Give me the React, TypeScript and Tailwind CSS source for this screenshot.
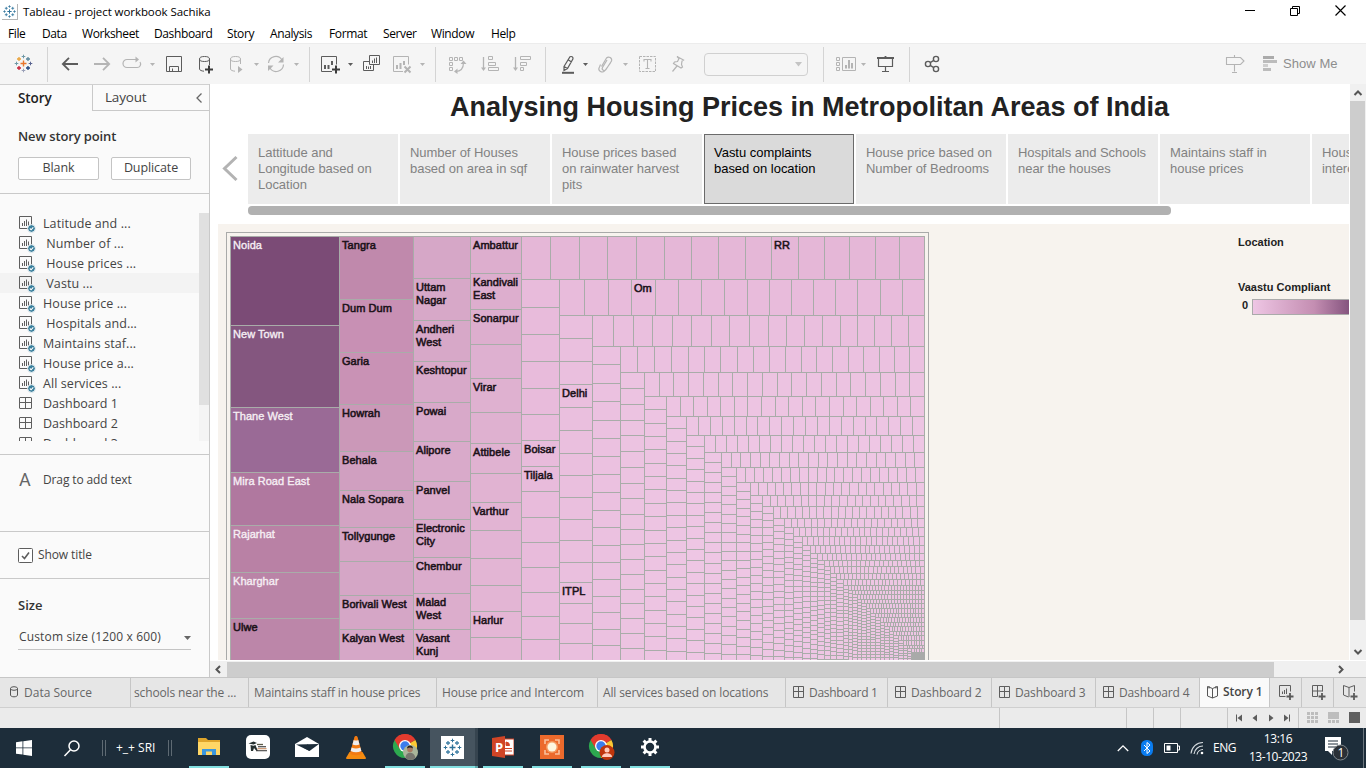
import React from "react";

type Kids = { children: React.ReactNode };

/* ---------- toolbar pieces ---------- */

function Ico({ children, c = "text-[#b4b4b4]", ml, w = 20 }: Kids & { c?: string; ml: string; w?: number }) {
  return (
    <svg width={w} height="20" viewBox={`0 0 ${w} 20`} fill="none" stroke="currentColor" strokeWidth="1" className={`shrink-0 ${ml} ${c}`}>
      {children}
    </svg>
  );
}

function Caret({ ml, c = "text-[#b4b4b4]" }: { ml: string; c?: string }) {
  return (
    <svg width="7" height="20" viewBox="0 0 7 20" className={`shrink-0 ${ml} ${c}`}>
      <path d="M1 9h5L3.500 12z" fill="currentColor" />
    </svg>
  );
}

function Sep({ ml }: { ml: string }) {
  return <div className={`h-[35px] w-px shrink-0 bg-[#d4d4d4] ${ml}`} />;
}

const dark = "text-[#5c5c5c]";

function TableauMark({ mono = false }: { mono?: boolean }) {
  const k = mono ? ["#2f7299", "#3f7fa5", "#3f7fa5", "#3f7fa5", "#3f7fa5"] : ["#e8762d", "#e9a23b", "#5b879b", "#c72037", "#1f447e"];
  const plus = (x: number, y: number, r: number) => `M${x - r} ${y}h${r * 2}M${x} ${y - r}v${r * 2}`;
  return (
    <g fill="none">
      <path d={plus(9.5, 9.5, 3)} stroke={k[0]} strokeWidth="1.4" />
      <path d={plus(5, 5, 2)} stroke={k[1]} strokeWidth="1.3" />
      <path d={plus(14, 5, 2)} stroke={k[2]} strokeWidth="1.3" />
      <path d={plus(5, 14, 2)} stroke={k[3]} strokeWidth="1.3" />
      <path d={plus(14, 14, 2)} stroke={k[4]} strokeWidth="1.3" />
      <path d={plus(9.5, 2.5, 1.8)} stroke={mono ? k[0] : "#7099a6"} />
      <path d={plus(2.5, 9.5, 1.8)} stroke={mono ? k[0] : "#7099a6"} />
      <path d={plus(16.5, 9.5, 1.8)} stroke={mono ? k[0] : "#5a6591"} />
      <path d={plus(9.5, 16.5, 1.8)} stroke={mono ? k[0] : "#9aa0b8"} />
    </g>
  );
}

function Toolbar() {
  return (
    <div className="flex h-[41px] shrink-0 items-center border-t border-[#ececec] bg-[#f5f5f5]">
      <Ico ml="ml-[14px]"><TableauMark /></Ico>
      <Sep ml="ml-[13px]" />
      <Ico ml="ml-3" c={dark}><path d="M2.500 10H18M9 3.800L2.800 10 9 16.200" strokeWidth="1.800" /></Ico>
      <Ico ml="ml-3"><path d="M2 10h15.500M11 3.800L17.200 10 11 16.200" strokeWidth="1.800" /></Ico>
      <Ico ml="ml-[10px]"><path d="M8 5.500H5a3.500 3.500 0 0 0 0 8h10a3.500 3.500 0 0 0 3-5.500M6 5.500h9" strokeWidth="1.200" /><path d="M13.500 2.500l3.500 3-3.500 3z" fill="currentColor" stroke="none" /></Ico>
      <Caret ml="ml-[7px]" />
      <Ico ml="ml-2" c={dark}><path d="M2.500 2.500h15v15h-15zM5.500 17.500v-5h9v5M8.500 14.500v3" /></Ico>
      <Ico ml="ml-3" c={dark}><ellipse cx="8.500" cy="5" rx="5" ry="2.500" /><path d="M3.500 5v10c0 1.200 2 2 4.500 2.200M13.500 5v6" /><path d="M13 11.500v8M9 15.500h8" strokeWidth="2" stroke="#3c3c3c" /></Ico>
      <Ico ml="ml-[11px]"><ellipse cx="8.500" cy="5" rx="5" ry="2.500" /><path d="M3.500 5v10c0 1.200 2 2 4.500 2.200M13.500 5v5" /><path d="M11 12v7l4.500-3.500z" fill="currentColor" stroke="none" /></Ico>
      <Caret ml="ml-[6px]" />
      <Ico ml="ml-[6px]"><path d="M2.500 9A7.300 7.300 0 0 1 16 6M17.500 10.500A7.300 7.300 0 0 1 4 14" strokeWidth="1.200" /><path d="M17.500 3v5.500H12zM2 17v-5.500h5.500z" fill="currentColor" stroke="none" /></Ico>
      <Caret ml="ml-[7px]" />
      <Sep ml="ml-[9px]" />
      <Ico ml="ml-[10px]" w={22} c={dark}><path d="M12 17.500H1.500v-15h15v8" /><path d="M5 15v-4M8.500 15v-4M12 11V7" strokeWidth="2" /><path d="M16 11.500v8M12 15.500h8" strokeWidth="2" stroke="#3c3c3c" /></Ico>
      <Caret ml="ml-[5px]" c={dark} />
      <Ico ml="ml-2" c={dark}><path d="M7.500 1.500h10v9h-10zM7.500 7.500h-6v9h10v-6M10.500 9V6.500M12.500 9V4.500M14.500 9V3.500M4.500 15v-3M6.500 15v-2.500M8.500 15v-3" /></Ico>
      <Ico ml="ml-[10px]" w={22}><path d="M11 17.500H1.500v-15h15v8" /><path d="M5 15v-4M8.500 15v-6M12 11V7" strokeWidth="2" /><path d="M12.500 12.500l6 6M18.500 12.500l-6 6" strokeWidth="2" /></Ico>
      <Caret ml="ml-[5px]" />
      <Sep ml="ml-[9px]" />
      <Ico ml="ml-3"><path d="M1.500 3.500h3v3h-3zM6.500 3.500h3v3h-3zM11.500 3.500h3v3h-3zM1.500 8.500h3v3h-3zM1.500 13.500h3v3h-3z" /><path d="M7.500 17.500c5 0 8-3 8-9" strokeWidth="1.200" /><path d="M12.500 10l3-3.500 3 3.500zM9.500 14.500L6 17.500l3.500 2.500z" fill="currentColor" stroke="none" /></Ico>
      <Ico ml="ml-3"><path d="M3.500 3v12" strokeWidth="1.300" /><path d="M1 13.500h5L3.500 17z" fill="currentColor" stroke="none" /><path d="M8.500 2.500h4v3h-4zM8.500 8.500h7v3h-7zM8.500 13.500h10v3h-10z" /></Ico>
      <Ico ml="ml-3"><path d="M3.500 3v12" strokeWidth="1.300" /><path d="M1 13.500h5L3.500 17z" fill="currentColor" stroke="none" /><path d="M8.500 2.500h10v3h-10zM8.500 8.500h6v3h-6zM8.500 13.500h3v3h-3z" /></Ico>
      <Sep ml="ml-[13px]" />
      <Ico ml="ml-3" c={dark}><path d="M6 12.500L12 2.800a2 2 0 0 1 3 2L9.500 14.500 6 16.500zM6 12.500l3.500 2M10.500 6l3 2" strokeWidth="1.200" /><path d="M4 18.800h12" strokeWidth="2" /></Ico>
      <Caret ml="ml-1" c={dark} />
      <Ico ml="ml-[7px]"><path d="M5.500 12.500l5-8.500a3 3 0 0 1 5 3L10 15.500a2 2 0 0 1-3.500-2L11 6M4.500 10.500l-1 2.500a3.200 3.200 0 0 0 5.500 3.500L14.500 9" strokeWidth="1.200" /></Ico>
      <Caret ml="ml-[6px]" />
      <Ico ml="ml-[9px]"><path d="M1.500 2.500h16v15h-16z" strokeDasharray="2.500 1" /><path d="M6 7.500v-2h7v2M9.500 5.500v9M7.500 14.500h4" strokeWidth="1.100" /></Ico>
      <Ico ml="ml-[10px]"><path d="M9 2.500l6.500 3.500-1.500 1-.5 3.500 1 2.500-1.500 1-7.500-4.500 1-1.500 3-.5 1.500-3zM9 12l-4.500 5.500" strokeWidth="1.200" /></Ico>
      <div className="ml-4 flex h-[23px] w-[104px] shrink-0 items-center justify-end rounded-sm border border-[#d0d0d0] pr-[5px]">
        <svg width="7" height="5"><path d="M0 0h7L3.500 4.500z" fill="#c4c4c4" /></svg>
      </div>
      <Sep ml="ml-[15px]" />
      <Ico ml="ml-3"><path d="M.5 3.500h3v3h-3zM.5 8.500h3v3h-3zM.5 13.500h3v3h-3zM6.500 3.500h13v13h-13z" /><path d="M10 14.500V11M13 14.500V6M16 14.500V9" strokeWidth="2" /></Ico>
      <Caret ml="ml-1" />
      <Ico ml="ml-[9px]" c={dark}><path d="M1 4h17M9.500 4V2" strokeWidth="1.800" /><path d="M2.500 4v8.500h14V4M9.500 12.500v5M6 17.500h7" strokeWidth="1.200" /></Ico>
      <Sep ml="ml-[13px]" />
      <Ico ml="ml-3" c={dark}><g strokeWidth="1.400"><circle cx="6" cy="10" r="2.600" /><circle cx="14" cy="5" r="2.600" /><circle cx="14" cy="15" r="2.600" /><path d="M8.200 8.600l3.600-2.200M8.200 11.400l3.600 2.200" /></g></Ico>
      <Ico ml="ml-[283px]"><path d="M1.500 3.500h14l3.500 3.500-3.500 3.500h-14zM9.500 1v2.500M9.500 10.500v7M7 18.500h5" strokeWidth="1.100" /></Ico>
      <Ico ml="ml-[17px]"><path d="M1 3.500h11" stroke="#ababab" strokeWidth="3" /><path d="M1 7.500h14" strokeWidth="3" stroke="#bcbcbc" /><path d="M1 11.500h5" strokeWidth="3" stroke="#cfcfcf" /><path d="M1 15.500h8" strokeWidth="3" stroke="#bcbcbc" /></Ico>
      <span className="ml-px whitespace-nowrap font-['Liberation_Sans',sans-serif] text-[13px] tracking-[0.05px] text-[#8d8d8d]">Show Me</span>
    </div>
  );
}

/* ---------- title and menus ---------- */

function TitleBar() {
  return (
    <div className="flex h-6 shrink-0 items-center bg-white font-['Open_Sans',sans-serif] text-black">
      <svg width="16" height="16" viewBox="-1 -1 21 21" className="ml-[2px] border-b border-r border-[#b5b5b5]"><TableauMark mono /></svg>
      <span className="ml-[5px] whitespace-nowrap text-[11.500px] tracking-[-0.07px]">Tableau - project workbook Sachika</span>
      <svg width="112" height="20" viewBox="0 0 112 20" className="ml-auto mr-[14px]" fill="none" stroke="#000" strokeWidth="1">
        <path d="M5 8.500h10M50.500 6.500h7v7h-7zM52.500 6.500v-2h7v7h-2" />
        <path d="M95.500 3.500l10 10M105.500 3.500l-10 10" strokeWidth="1.200" />
      </svg>
    </div>
  );
}

function MenuBar() {
  return (
    <div className="flex h-[19px] shrink-0 items-center whitespace-nowrap bg-white pl-2 font-['Open_Sans',sans-serif] text-[12px] tracking-[-0.38px] text-black">
      <span className="w-[34px]">File</span>
      <span className="w-[40px]">Data</span>
      <span className="w-[72px]">Worksheet</span>
      <span className="w-[73px]">Dashboard</span>
      <span className="w-[43px]">Story</span>
      <span className="w-[59px]">Analysis</span>
      <span className="w-[54px]">Format</span>
      <span className="w-[48px]">Server</span>
      <span className="w-[60px]">Window</span>
      <span>Help</span>
    </div>
  );
}

/* ---------- side panel ---------- */

const sheets = ["Latitude and ...", "\u00a0Number of ...", "\u00a0House prices ...", "\u00a0Vastu ...", "House price ...", "\u00a0Hospitals and...", "Maintains staf...", "House price a...", "All services ..."];
const boards = ["Dashboard 1", "Dashboard 2", "Dashboard 3"];

function SheetIcon() {
  return (
    <svg width="18" height="18" viewBox="0 0 18 18" className="ml-[18px] mt-px shrink-0" fill="none" stroke="#5e5e5e">
      <path d="M1.500 1.500h12v12h-12zM4.500 11v-3M6.500 11V6M8.500 11V4.500M10.500 11V6.500" strokeWidth="1" />
      <circle cx="13.500" cy="13.500" r="3.900" fill="#3a7f9c" stroke="#fafafa" strokeWidth="1" />
      <path d="M11.800 13.500l1.300 1.300 2.200-2.500" stroke="#fff" strokeWidth="1.100" />
    </svg>
  );
}

function GridIcon({ className = "" }: { className?: string }) {
  return (
    <svg width="14" height="14" viewBox="0 0 14 14" className={`shrink-0 ${className}`} fill="none" stroke="#5e5e5e">
      <rect x=".5" y="1.500" width="12" height="11" rx=".5" />
      <path d="M6.500 1.500v11M.5 6.500h12" />
    </svg>
  );
}

function SidePanel() {
  return (
    <div className="flex w-[210px] shrink-0 flex-col border-r border-[#c9c9c9] bg-[#fafafa] font-['Open_Sans',sans-serif] text-[12.500px] text-[#444]">
      <div className="flex h-[27px] shrink-0 border-t border-[#d0d0d0]">
        <div className="flex w-[92px] items-center pl-[18px] text-[13.500px] font-semibold tracking-[-0.1px] text-[#222]">Story</div>
        <div className="flex grow items-center border-b border-l border-[#c9c9c9] pl-3 text-[13.500px] tracking-[-0.2px]">
          Layout
          <svg width="8" height="12" viewBox="0 0 8 12" className="ml-auto mr-[6px]" fill="none" stroke="#666" strokeWidth="1.300"><path d="M6.500 1.500L2 6l4.500 4.500" /></svg>
        </div>
      </div>
      <div className="mt-[16px] pl-[18px] text-[13px] font-semibold leading-[18px] tracking-[-0.12px] text-[#333]">New story point</div>
      <div className="mt-3 flex gap-3 pl-[18px] text-[12.500px] leading-[20px] tracking-[-0.1px]">
        <div className="h-[23px] w-[81px] rounded-[2px] border border-[#c4c4c4] bg-white text-center">Blank</div>
        <div className="h-[23px] w-[80px] rounded-[2px] border border-[#c4c4c4] bg-white text-center">Duplicate</div>
      </div>
      <div className="mt-[13px] h-px shrink-0 bg-[#c9c9c9]" />
      <div className="mt-[19px] flex h-[228px] shrink-0 overflow-hidden">
        <div className="flex grow flex-col">
          {sheets.map((s, i) => (
            <div key={s} className={`flex h-5 shrink-0 items-center ${i === 3 ? "bg-[#f3f3f3]" : ""}`}>
              <SheetIcon />
              <span className="ml-[7px] whitespace-nowrap pt-[2px] tracking-[0.08px]">{s}</span>
            </div>
          ))}
          {boards.map((s) => (
            <div key={s} className="flex h-5 shrink-0 items-center">
              <GridIcon className="ml-[19px]" />
              <span className="ml-[10px] whitespace-nowrap pt-[2px]">{s}</span>
            </div>
          ))}
        </div>
        <div className="w-[10px] shrink-0 bg-[#f4f4f4]"><div className="h-[192px] bg-[#e0e0e0]" /></div>
      </div>
      <div className="mt-[13px] flex h-[78px] shrink-0 border-y border-[#c9c9c9] pt-[15px]">
        <span className="w-[43px] pl-[19px] font-['Roboto',sans-serif] text-[18px] leading-[20px] text-[#666]">A</span>
        <span className="text-[12px] leading-[20px] tracking-[-0.12px]">Drag to add text</span>
      </div>
      <div className="flex h-[47px] shrink-0 items-center border-b border-[#c9c9c9] pl-[18px]">
        <svg width="15" height="15" viewBox="0 0 15 15" fill="#fff" stroke="#5e5e5e"><rect x=".5" y=".5" width="14" height="14" rx="1" /><path d="M4 8l2.500 2.500L11 4.500" fill="none" strokeWidth="1.600" /></svg>
        <span className="ml-[5px] text-[12px] tracking-[-0.1px]">Show title</span>
      </div>
      <div className="mt-[16px] pl-[18px] text-[13px] font-semibold leading-[20px] text-[#333]">Size</div>
      <div className="ml-[18px] mt-[12px] flex h-[23px] w-[173px] items-center border-b border-[#c4c4c4] pb-[2px] pl-px text-[12px] tracking-[0.16px]">
        Custom size (1200 x 600)
        <svg width="7" height="4" className="ml-auto mt-[2px]"><path d="M0 0h7L3.500 4z" fill="#666" /></svg>
      </div>
    </div>
  );
}

/* ---------- treemap ---------- */

type Cell = { y: number; c: string; t?: string[]; light?: boolean };
type Col = { x: number; w: number; cells: Cell[] };

const bigCols: Col[] = [
  { x: 230, w: 109, cells: [
    { y: 236, c: "#7b4b76", t: ["Noida"], light: true },
    { y: 325, c: "#84567f", t: ["New Town"], light: true },
    { y: 407, c: "#9a6a96", t: ["Thane West"], light: true },
    { y: 472, c: "#b0789f", t: ["Mira Road East"], light: true },
    { y: 525, c: "#b981a5", t: ["Rajarhat"], light: true },
    { y: 572, c: "#ba84a7", t: ["Kharghar"], light: true },
    { y: 618, c: "#bc86a9", t: ["Ulwe"] },
  ] },
  { x: 339, w: 74, cells: [
    { y: 236, c: "#c089ac", t: ["Tangra"] },
    { y: 299, c: "#c890b4", t: ["Dum Dum"] },
    { y: 352, c: "#c992b5", t: ["Garia"] },
    { y: 404, c: "#cb98b8", t: ["Howrah"] },
    { y: 451, c: "#d09fc0", t: ["Behala"] },
    { y: 490, c: "#d3a3c3", t: ["Nala Sopara"] },
    { y: 527, c: "#d5a5c5", t: ["Tollygunge"] },
    { y: 561, c: "#d5a6c6" },
    { y: 595, c: "#d5a6c6", t: ["Borivali West"] },
    { y: 629, c: "#d6a7c7", t: ["Kalyan West"] },
  ] },
  { x: 413, w: 57, cells: [
    { y: 236, c: "#d6a7c7" },
    { y: 278, c: "#d7a8c8", t: ["Uttam", "Nagar"] },
    { y: 320, c: "#d7a8c8", t: ["Andheri", "West"] },
    { y: 361, c: "#d8a9c9", t: ["Keshtopur"] },
    { y: 402, c: "#d8a9c9", t: ["Powai"] },
    { y: 441, c: "#d9aaca", t: ["Alipore"] },
    { y: 481, c: "#daabcb", t: ["Panvel"] },
    { y: 519, c: "#daabcb", t: ["Electronic", "City"] },
    { y: 557, c: "#dbaccc", t: ["Chembur"] },
    { y: 593, c: "#dcadcc", t: ["Malad", "West"] },
    { y: 629, c: "#dcadcd", t: ["Vasant", "Kunj"] },
  ] },
  { x: 470, w: 51, cells: [
    { y: 236, c: "#ddaece", t: ["Ambattur"] },
    { y: 273, c: "#ddaece", t: ["Kandivali", "East"] },
    { y: 309, c: "#ddaece", t: ["Sonarpur"] },
    { y: 344, c: "#deb0d0" },
    { y: 378, c: "#dfb1d0", t: ["Virar"] },
    { y: 412, c: "#dfb1d0" },
    { y: 443, c: "#e0b2d1", t: ["Attibele"] },
    { y: 473, c: "#e1b3d2" },
    { y: 502, c: "#e2b4d3", t: ["Varthur"] },
    { y: 530, c: "#e2b4d4" },
    { y: 558, c: "#e3b5d4" },
    { y: 585, c: "#e3b5d4" },
    { y: 611, c: "#e4b6d5", t: ["Harlur"] },
    { y: 637, c: "#e4b6d5" },
  ] },
];

// One entry per nested corner: left edge, row top, row bottom, cell width in the row, cell height in the column
const shells: [number, number, number, number, number][] = [
  [521, 236, 279, 27, 25.5], [559, 279, 315, 22.5, 21.5], [592, 315, 346, 19, 17.6], [620, 346, 372, 16.4, 15.4],
  [644, 372, 396, 14.6, 13.4], [666, 396, 416, 13.3, 12.3], [686, 416, 435, 12.1, 11.6], [704, 435, 452, 11, 10],
  [721, 452, 467, 9.7, 9.2], [736, 467, 482, 8.9, 8.7], [750, 482, 495, 8.3, 8], [762, 495, 506, 7.6, 7],
  [773, 506, 518, 7.2, 6.5], [784, 518, 527, 6.6, 6], [793, 527, 536, 6, 5.5], [802, 536, 545, 5.4, 5.1],
  [810, 545, 553, 5, 4.8], [817, 553, 560, 4.8, 4.5], [824, 560, 566, 4.5, 4.2], [830, 566, 573, 4.2, 4],
  [836, 573, 579, 4, 3.9], [843, 579, 585, 3.8, 3.5], [848, 585, 590, 3.1, 3.4], [852, 590, 594, 3, 3.2],
  [857, 594, 599, 3, 3.1], [861, 599, 603, 3, 3], [866, 603, 608, 2.9, 3], [870, 608, 613, 2.9, 3],
  [875, 613, 617, 2.9, 3], [880, 617, 622, 2.8, 3], [884, 622, 626, 2.8, 2.8], [889, 626, 631, 2.8, 2.8],
  [893, 631, 635, 2.7, 2.7], [898, 635, 640, 2.7, 2.7], [903, 640, 645, 2.6, 2.6], [907, 645, 648, 2.5, 2.5],
  [911, 648, 652, 2.5, 2.5],
];
const rowSplits: Record<number, number[]> = {
  0: [550, 579, 607, 636, 664, 691, 718, 745, 771, 798, 824, 849, 875, 899],
  1: [584, 608, 631, 655, 678, 701, 724, 747, 769, 791, 813, 835, 857, 880, 902],
  2: [613, 633, 652, 672, 691, 711, 729, 749, 768, 786, 804, 822, 840, 857, 874, 891, 908],
  3: [637, 654, 671, 688, 704, 720, 737, 753, 769, 785, 801, 816, 832, 848, 863, 879, 894, 909],
};
const colSplits: Record<number, number[]> = {
  0: [307, 334, 361, 388, 414, 440, 466, 491, 517, 542, 567, 592, 616, 639],
  1: [338, 361, 384, 407, 430, 453, 475, 497, 519, 540, 562, 582, 603, 623, 643],
  2: [364, 383, 401, 420, 438, 456, 474, 492, 510, 527, 545, 562, 579, 596, 612, 629, 645],
  3: [388, 404, 420, 435, 451, 467, 483, 498, 514, 529, 544, 559, 574, 589, 603, 618, 633, 648],
};
const RIGHT = 924;
const BOTTOM = 660;
const tones = ["#e5b7d7", "#e8bbdb", "#eabfde", "#ebc1e0", "#ecc3e1", "#edc4e2", "#edc5e3", "#eec6e4"];

function evenSplits(a: number, b: number, step: number): number[] {
  const n = Math.round((b - a) / step);
  return Array.from({ length: Math.max(0, n - 1) }, (_, i) => Math.round(a + ((b - a) * (i + 1)) / n));
}

function shellLines(): string {
  let d = "";
  shells.forEach(([x, y0, y1, cw, ch], i) => {
    const nextX = i + 1 < shells.length ? shells[i + 1][0] : 914;
    d += `M${x + 0.5} ${y0}V${BOTTOM}M${x} ${y1 + 0.5}H${RIGHT}`;
    (rowSplits[i] ?? evenSplits(x, RIGHT, cw)).forEach((v) => { d += `M${v + 0.5} ${y0}V${y1}`; });
    (colSplits[i] ?? evenSplits(y1, BOTTOM + 3, ch)).forEach((v) => { if (v < BOTTOM) d += `M${x} ${v + 0.5}H${nextX}`; });
  });
  return d;
}

const inner: [number, number, string][] = [[774, 249, "RR"], [634, 292, "Om"], [562, 397, "Delhi"], [524, 453, "Boisar"], [524, 479, "Tiljala"], [562, 595, "ITPL"]];

function Treemap() {
  return (
    <svg width="703" height="428" viewBox="226 232 703 428" className="block" fontFamily="'Liberation Sans', Arial, sans-serif" fontSize="11">
      <rect x="226.500" y="232.500" width="702" height="440" fill="#f7f3ee" stroke="#a9aaa9" />
      <g shapeRendering="crispEdges">
        {bigCols.map((col) => col.cells.map((cell, i) => (
          <rect key={`${col.x}-${cell.y}`} x={col.x} y={cell.y} width={col.w} height={(col.cells[i + 1]?.y ?? BOTTOM) - cell.y} fill={cell.c} />
        )))}
        {shells.map(([x, y], i) => <rect key={x} x={x} y={y} width={RIGHT - x} height={BOTTOM - y} fill={tones[Math.min(i, tones.length - 1)]} />)}
        {shells.slice(0, 7).map(([x, , y1], i) => <rect key={x} x={x} y={y1} width={shells[i + 1][0] - x} height={BOTTOM - y1} fill={tones[i + 1]} />)}
      </g>
      <path shapeRendering="crispEdges" fill="none" stroke="#a9aca9" d={shellLines() + bigCols.map((c) => `M${c.x + 0.5} 236V660` + c.cells.map((k) => `M${c.x} ${k.y + 0.5}h${c.w}`).join("")).join("") + "M521 236.500H925M924.500 236V660"} />
      <rect x="912" y="652" width="13" height="8" fill="#a9aaa9" />
      {bigCols.map((col) => col.cells.map((cell) => cell.t?.map((s, i) => (
        <text key={s + cell.y} x={col.x + 3} y={cell.y + 13 + i * 13} fill={cell.light ? "#f6eff4" : "#1c1219"} stroke={cell.light ? "#f6eff4" : "#1c1219"} strokeWidth={cell.light ? 0.35 : 0.55} letterSpacing=".05">{s}</text>
      ))))}
      {inner.map(([x, y, s]) => <text key={s} x={x} y={y} fill="#1c1219" stroke="#1c1219" strokeWidth=".55" letterSpacing=".05">{s}</text>)}
    </svg>
  );
}

/* ---------- story canvas ---------- */

const points = ["Lattitude and\nLongitude based on\nLocation", "Number of Houses\nbased on area in sqf", "House prices based\non rainwater harvest\npits", "Vastu complaints\nbased on location", "House price based on\nNumber of Bedrooms", "Hospitals and Schools\nnear the houses", "Maintains staff in\nhouse prices", "House price and\nintercom"];

function Story() {
  return (
    <div className="flex min-w-0 grow flex-col overflow-hidden bg-white pr-px font-['Liberation_Sans',Arial,sans-serif]">
      <h1 className="mt-[5px] h-[36px] shrink-0 whitespace-nowrap pl-[60px] text-center text-[27px] font-bold leading-[36px] text-[#222]">Analysing Housing Prices in Metropolitan Areas of India</h1>
      <div className="mt-[9px] flex h-[70px] shrink-0 items-center">
        <svg width="38" height="30" viewBox="0 0 38 30" className="shrink-0" fill="none" stroke="#b3b3b3" strokeWidth="3"><path d="M26.500 3L14.500 14.500 26.500 26" /></svg>
        <div className="flex h-full gap-[2px] overflow-hidden">
          {points.map((p, i) => (
            <div key={p} className={`h-[70px] w-[150px] shrink-0 whitespace-pre text-[13px] leading-4 tracking-[-0.03px] ${i === 3 ? "border border-[#6b6b6b] bg-[#dadada] pl-[9px] pt-[10px] text-black" : "bg-[#ececec] pl-[10px] pt-[11px] text-[#828282]"}`}>{p}</div>
          ))}
        </div>
      </div>
      <div className="ml-[38px] mt-[2px] h-[9px] w-[923px] shrink-0 rounded-[4px] bg-[#b1b1b1]" />
      <div className="ml-2 mt-[9px] flex grow overflow-hidden bg-[#f7f3ee] pl-2 pt-2">
        <div className="shrink-0"><Treemap /></div>
        <div className="ml-[309px] flex flex-col text-[11px] font-bold text-[#222]">
          <span className="mt-[3px] leading-[14px]">Location</span>
          <span className="mt-[31px] whitespace-nowrap leading-[14px]">Vaastu Compliant</span>
          <div className="mt-[5px] flex items-center">
            <span className="w-[14px] pb-[3px] pl-1 leading-[13px]">0</span>
            <div className="h-4 w-[104px] shrink-0 border border-[#aaa] bg-linear-to-r from-[#eec6e4] via-[#c48eb2] via-60% to-[#7b4b76]" />
          </div>
        </div>
      </div>
    </div>
  );
}

function VScroll() {
  return (
    <div className="flex w-4 shrink-0 flex-col bg-[#f0f0f0]">
      <svg width="16" height="17" viewBox="0 0 16 17" fill="none" stroke="#555" strokeWidth="2"><path d="M4.500 11L8 7.500l3.500 3.500" /></svg>
      <div className="h-[519px] w-[15px] bg-[#cdcdcd]" />
      <svg width="16" height="17" viewBox="0 0 16 17" className="mt-auto" fill="none" stroke="#555" strokeWidth="2"><path d="M4.500 7L8 10.500 11.500 7" /></svg>
    </div>
  );
}

function HScroll() {
  return (
    <div className="flex h-[17px] shrink-0 items-center border-t border-white bg-[#f0f0f0]">
      <svg width="17" height="15" viewBox="0 0 17 15" fill="none" stroke="#555" strokeWidth="2"><path d="M10 4L6.500 7.500 10 11" /></svg>
      <div className="h-[15px] w-[1047px] bg-[#cdcdcd]" />
      <svg width="16" height="15" viewBox="0 0 16 15" className="ml-[59px]" fill="none" stroke="#555" strokeWidth="2"><path d="M6 4l3.500 3.500L6 11" /></svg>
    </div>
  );
}

/* ---------- sheet tabs and status ---------- */

function BookIcon() {
  return <svg width="13" height="14" viewBox="0 0 13 14" className="shrink-0" fill="none" stroke="#555"><path d="M6.500 3.500L1.500 1.500v9.500l5 2 5-2V1.500zM6.500 3.500V13M3 1v2.500M10 1v2.500" /></svg>;
}

function PlusBadge() {
  return <path d="M12 9v7M8.500 12.500h7" stroke="#5a5a5a" strokeWidth="1.800" />;
}

function TabGrid() {
  return (
    <svg width="12" height="14" viewBox="0 0 12 14" className="mb-[2px] shrink-0" fill="none" stroke="#5e5e5e">
      <path d="M.5 1.500h10v11H.5zM5.500 1.500v11M.5 6.500h10" />
    </svg>
  );
}

const tabCls = "flex h-full shrink-0 items-center border-r border-[#c6c6c6] whitespace-nowrap";

function SheetTabs() {
  return (
    <div className="flex h-[31px] shrink-0 items-center border-y border-b-[#cfcfcf] border-t-[#c6c6c6] bg-[#e6e6e6] font-['Open_Sans',sans-serif] text-[12px] tracking-[-0.13px] text-[#666]">
      <div className={`${tabCls} w-[131px] pl-[9px] tracking-[0px]`}>
        <svg width="10" height="12" viewBox="0 0 10 12" className="mb-[2px] mr-[5px]" fill="none" stroke="#555"><ellipse cx="5" cy="2.500" rx="3.500" ry="1.800" /><path d="M1.500 2.500v6.500c0 2.400 7 2.400 7 0V2.500" /></svg>Data Source
      </div>
      <div className={`${tabCls} w-[118px] pl-[3px]`}>schools near the ...</div>
      <div className={`${tabCls} w-[188px] pl-[5px]`}>Maintains staff in house prices</div>
      <div className={`${tabCls} w-[161px] pl-[5px]`}>House price and Intercom</div>
      <div className={`${tabCls} w-[188px] pl-[5px]`}>All services based on locations</div>
      <div className={`${tabCls} w-[102px] gap-1 pl-[7px] tracking-[-0.3px]`}><TabGrid />Dashboard 1</div>
      <div className={`${tabCls} w-[104px] gap-1 pl-[7px]`}><TabGrid />Dashboard 2</div>
      <div className={`${tabCls} w-[104px] gap-1 pl-[7px]`}><TabGrid />Dashboard 3</div>
      <div className={`${tabCls} w-[104px] gap-1 pl-[7px]`}><TabGrid />Dashboard 4</div>
      <div className={`${tabCls} w-[70px] gap-1 bg-[#fafafa] pb-px pl-[6px] font-semibold tracking-[-0.1px] text-[#444]`}><BookIcon />Story 1</div>
      <div className={`${tabCls} w-[32px] pl-[8px]`}><svg width="17" height="17" fill="none" stroke="#5e5e5e"><path d="M7.500 12.500h-6v-11h11v6M4.500 10V7.500M6.500 10V6M8.500 10V4.500" /><PlusBadge /></svg></div>
      <div className={`${tabCls} w-[32px] pl-[8px]`}><svg width="17" height="17" fill="none" stroke="#5e5e5e"><path d="M7.500 12.500h-5v-11h10v6M7.500 1.500v11M2.500 7h10" /><PlusBadge /></svg></div>
      <div className="flex h-full grow items-center pl-[8px]"><svg width="17" height="17" fill="none" stroke="#5e5e5e"><path d="M7 3.500L1.500 1.500v9.500l5 2M7 3.500l5.500-2v6M7 3.500V13" /><PlusBadge /></svg></div>
    </div>
  );
}

function StatusBar() {
  return (
    <div className="flex h-5 shrink-0 bg-[#ebebeb]">
      <div className="w-[1000px] border-r border-[#c6c6c6]" />
      <div className="w-[127px] border-r border-[#c6c6c6]" />
      <div className="w-[27px] border-r border-[#c6c6c6]" />
      <div className="w-[27px] border-r border-[#c6c6c6]" />
      <div className="w-[47px] border-r border-[#c6c6c6]" />
      <div className="flex w-[71px] items-center border-r border-[#c6c6c6]">
        <svg width="70" height="12" viewBox="0 0 70 12" fill="#5c5c5c"><path d="M8 2.500h1v7H8zM14 2.500v7L9.500 6zM29 2.500v7L24.500 6zM41 2.500v7L45.500 6zM56 2.500v7L60.500 6zM61 2.500h1v7h-1z" /></svg>
      </div>
      <svg width="67" height="20" viewBox="0 0 67 20" fill="#bdbdbd">
        {[0, 4, 8].map((x) => [4, 8, 12].map((y) => <rect key={`${x}-${y}`} x={8 + x} y={y} width="3" height="3" />))}
        <path d="M29 4h11v7H29zM29 12h3v3h-3zM33 12h3v3h-3zM37 12h3v3h-3z" />
        <path d="M50 4h11v11H50z" fill="#5f5f5f" />
      </svg>
    </div>
  );
}

/* ---------- taskbar ---------- */

function Slot({ children, w, open = false, active = false }: Kids & { w: string; open?: boolean; active?: boolean }) {
  return (
    <div className={`flex h-full shrink-0 flex-col items-center ${w} ${active ? "bg-[#46545f]" : ""}`}>
      <div className="flex grow items-center justify-center">{children}</div>
      <div className={`h-[2px] ${active ? "w-full" : "w-10"} ${open ? "bg-[#82dfe0]" : ""}`} />
    </div>
  );
}

function Chrome({ badge }: { badge: "photo" | "red" }) {
  return (
    <svg width="28" height="28" viewBox="-1 0 28 28">
      <path d="M13 13L2.600 7A12 12 0 0 1 23.400 7z" fill="#e33b2e" />
      <path d="M13 13L23.400 7A12 12 0 0 1 13 25z" fill="#fcc934" />
      <path d="M13 13v12A12 12 0 0 1 2.600 7z" fill="#2da94f" />
      <path d="M13 7h10.500a12 12 0 0 0-20.900 0L7.800 16z" fill="#e33b2e" />
      <circle cx="13" cy="13" r="6" fill="#fff" /><circle cx="13" cy="13" r="4.700" fill="#3b7ded" />
      {badge === "red" ? (
        <g><circle cx="19" cy="19.500" r="7.500" fill="#bf360c" /><circle cx="19" cy="17" r="2.500" fill="#ffccbc" /><path d="M14 24c0-5 10-5 10 0z" fill="#ffccbc" /></g>
      ) : (
        <g><circle cx="18.500" cy="19.500" r="7.500" fill="#a9b59a" /><circle cx="18" cy="16.500" r="2.800" fill="#a87961" /><path d="M15 15.500c0-4 6-4 6 0-2-1.500-4-1.500-6 0z" fill="#27211f" /><path d="M13.500 25c0-7 9-7 10 0a7.500 7.500 0 0 1-10 0z" fill="#77766f" /></g>
      )}
    </svg>
  );
}

function Taskbar() {
  return (
    <div className="flex h-10 shrink-0 items-center bg-[#1d2d3a] font-['Open_Sans',sans-serif] text-[12px] text-white">
      <div className="flex w-12 justify-center"><svg width="16" height="16" fill="#fff"><path d="M0 2.200L6.500 1.300V7.500H0zM7.300 1.200L16 0v7.500H7.300zM0 8.300h6.500v6.300L0 13.700zM7.300 8.300H16V16l-8.700-1.200z" /></svg></div>
      <div className="flex w-12 justify-center"><svg width="18" height="18" fill="none" stroke="#fff" strokeWidth="1.500"><circle cx="11" cy="7" r="5" /><path d="M7.500 10.800L1.500 17" /></svg></div>
      <div className="ml-[6px] h-4 w-[4px] border-x border-[#5e6a73]" />
      <span className="ml-[10px] w-[42px] whitespace-nowrap text-[12px] tracking-[0px]">+_+ SRI</span>
      <div className="ml-[10px] h-4 w-[4px] border-x border-[#5e6a73]" />
      <div className="w-[12px]" />
      <Slot w="w-[49px]" open><svg width="22" height="20" viewBox="0 0 22 20"><path d="M0 1h8l2 2h12v15H0z" fill="#dfa52b" /><path d="M0 5h22v13H0z" fill="#ffd766" /><path d="M4 18v-6h14v6h-4v-3.500H8V18z" fill="#3b97dd" /></svg></Slot>
      <Slot w="w-[49px]"><svg width="24" height="24" viewBox="0 0 24 24"><rect width="24" height="24" rx="5" fill="#fff" /><path d="M2.500 8.500l5-2 3.500 1.500-3.500 1.500zM4.500 10l3 .8 2-.8.5 1.500 2 4.500h-1.500l-2.500-3-1 3H5z" fill="#25302f" /><path d="M11 9.500h6" stroke="#5c5b48" strokeWidth="1.300" /><path d="M12 11.700h8" stroke="#555" strokeWidth="1.300" /><path d="M11.500 13.700h9" stroke="#c98d62" strokeWidth="1.100" /><path d="M10 15.700h11" stroke="#444" strokeWidth="1.100" /></svg></Slot>
      <Slot w="w-[49px]"><svg width="24" height="20" viewBox="0 0 24 20"><path d="M0 7l12-7 12 7v13H0z" fill="#fff" /><path d="M1 7.500L24 7l-9.500 7z" fill="#1d2d3a" /><path d="M13 7l-4 4 5.500 3z" fill="#1d2d3a" /></svg></Slot>
      <Slot w="w-[49px]"><svg width="20" height="23" viewBox="0 0 20 23"><path d="M3.500 16h13l3.500 6a1 1 0 0 1-1 1H1a1 1 0 0 1-1-1z" fill="#f58b10" /><path d="M10 0c1 0 1.400.6 1.600 1.300L16 17c-1 3-11 3-12 0L8.400 1.300C8.600.6 9 0 10 0z" fill="#f27a12" /><path d="M7.700 4l-1.200 4.500q3.500 1.500 7 0L12.300 4q-2.300 1-4.600 0zM5.600 11.500L4.700 15q5.300 2.500 10.600 0l-.9-3.500q-4.400 2-8.800 0z" fill="#eee" /></svg></Slot>
      <Slot w="w-[50px]" open><Chrome badge="photo" /></Slot>
      <Slot w="w-[45px]" open active><svg width="23" height="23" viewBox="-2 -2 23 23"><path d="M-2-2h23v23H-2z" fill="#fff" /><TableauMark mono /></svg></Slot>
      <div className="flex h-full w-[3px] flex-col justify-end bg-[#36444f]"><div className="h-[2px] bg-[#5fa9ac]" /></div>
      <Slot w="w-[49px]" open><svg width="22" height="22" viewBox="0 0 22 22"><path d="M11 3h11v16H11z" fill="#fff" stroke="#d04526" /><path d="M14 6v3.500h3.500A3.500 3.500 0 0 0 14 6M13 12.500h7M13 15h7" fill="#d04526" stroke="#d04526" /><path d="M0 2l13-2v22L0 20z" fill="#d04526" /><text x="3" y="16" fill="#fff" fontFamily="'Open Sans',sans-serif" fontWeight="700" fontSize="13">P</text></svg></Slot>
      <Slot w="w-[49px]" open><svg width="24" height="24" viewBox="0 0 24 24"><path d="M0 0h24v24H0z" fill="#ec6a2c" /><path d="M5 9V5h4M15 5h4v4M19 15v4h-4M9 19H5v-4" fill="none" stroke="#f9c09c" strokeWidth="1.600" /><circle cx="12" cy="12" r="6" fill="#f59b61" /><circle cx="12" cy="12" r="4.500" fill="#fdf6df" /></svg></Slot>
      <Slot w="w-[49px]" open><Chrome badge="red" /></Slot>
      <Slot w="w-[49px]" open>
        <svg width="20" height="20" viewBox="0 0 20 20" fill="none" stroke="#fff"><circle cx="10" cy="10" r="5.500" strokeWidth="2.600" /><path d="M10 1v3M10 16v3M1 10h3M16 10h3M3.600 3.600l2.200 2.200M14.200 14.200l2.200 2.200M3.600 16.400l2.200-2.200M14.200 5.800l2.200-2.200" strokeWidth="3" /></svg>
      </Slot>
      <svg width="12" height="8" className="ml-auto shrink-0" fill="none" stroke="#fff" strokeWidth="1.300"><path d="M.8 7L6 1.800 11.200 7" /></svg>
      <svg width="12" height="16" viewBox="0 0 12 16" className="ml-[12px] shrink-0"><rect width="12" height="16" rx="5.500" fill="#0a7cf0" /><path d="M3 5l6 6-3 2.500v-11L9 5l-6 6" fill="none" stroke="#fff" /></svg>
      <svg width="16" height="10" viewBox="0 0 16 10" className="ml-[11px] shrink-0" fill="none" stroke="#fff"><path d="M.5.500h13v9H.5zM14 3h1.500v4H14" /><path d="M2.500 2.500h4v5h-4z" fill="#fff" stroke="none" /></svg>
      <svg width="14" height="14" viewBox="0 0 14 14" className="ml-[10px] shrink-0" fill="none" stroke="#d7dde1" strokeWidth="1.100"><path d="M1 12.500A12 12 0 0 1 13 1.500M4 13a9 9 0 0 1 9-8M7 13.500a6 6 0 0 1 6-5" /><circle cx="12" cy="12" r="1.300" fill="#fff" stroke="none" /></svg>
      <span className="ml-[9px] w-[25px] tracking-[-0.5px]">ENG</span>
      <div className="ml-[9px] flex w-[62px] flex-col items-center whitespace-nowrap leading-[18px] tracking-[-0.45px]"><span>13:16</span><span>13-10-2023</span></div>
      <svg width="26" height="28" viewBox="0 0 26 28" className="ml-[15px] shrink-0"><path d="M1 3h16v14H8v4l-4-4H1z" fill="#fff" /><path d="M4 7h10M4 10h10M4 13h10" stroke="#1d2d3a" /><circle cx="16.500" cy="18.500" r="7.500" fill="#2a3036" stroke="#80878c" /><text x="13.500" y="23" fontSize="12" fill="#fff" fontFamily="'Open Sans',sans-serif">1</text></svg>
      <div className="ml-[13px] mr-[2px] h-10 w-px bg-[#6b757d]" />
    </div>
  );
}

export default function App() {
  return (
    <div className="flex h-[768px] w-[1366px] flex-col overflow-hidden bg-white">
      <TitleBar />
      <MenuBar />
      <Toolbar />
      <div className="flex h-[593px] shrink-0">
        <SidePanel />
        <div className="flex min-w-0 grow flex-col">
          <div className="flex h-[576px] shrink-0"><Story /><VScroll /></div>
          <HScroll />
        </div>
      </div>
      <SheetTabs />
      <StatusBar />
      <Taskbar />
    </div>
  );
}
